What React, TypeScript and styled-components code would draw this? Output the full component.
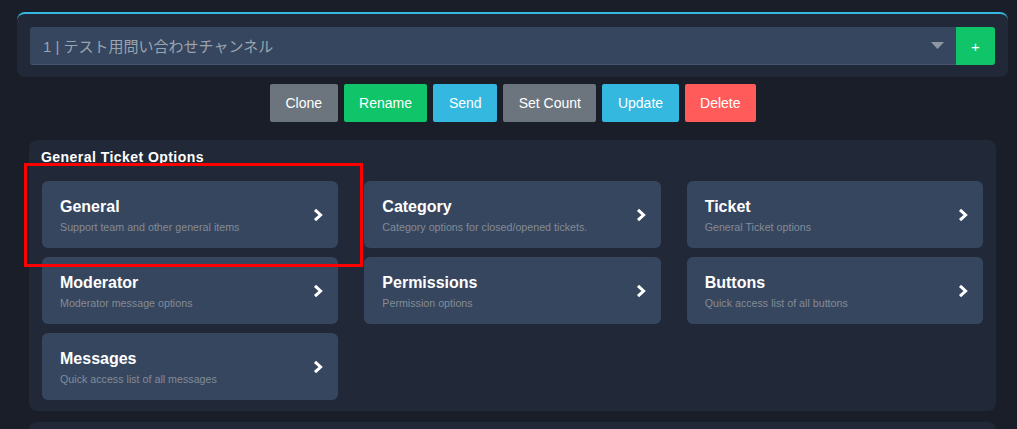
import React from 'react';
import styled, { createGlobalStyle } from 'styled-components';

const GlobalStyle = createGlobalStyle`
  html, body {
    margin: 0;
    padding: 0;
    background: #191e29;
    font-family: "Liberation Sans", Arial, "Noto Sans CJK JP", sans-serif;
    overflow: hidden;
  }
`;

const colors = {
  gray: '#6c757d',
  green: '#10c469',
  cyan: '#35b8e0',
  red: '#ff5b5b',
};

type Variant = keyof typeof colors;

const Page = styled.div`
  position: relative;
  width: 991px;
  padding: 12px 0 0 17px;
`;

const TopPanel = styled.div`
  display: flex;
  background: #212938;
  border-top: 2px solid #35b8e0;
  border-radius: 8px;
  padding: 13px 13px 12px 13px;
`;

const SelectBox = styled.div`
  flex: 1;
  display: flex;
  align-items: center;
  justify-content: space-between;
  height: 38px;
  box-sizing: border-box;
  padding: 0 12px 0 13px;
  background: #36465e;
  border-bottom: 1px solid #46556d;
  border-radius: 3px 0 0 3px;
  color: #9aa4b0;
  font-size: 15px;
  font-family: "Liberation Sans", Arial, "Noto Sans CJK JP", sans-serif;
`;

const AddButton = styled.button`
  width: 39px;
  height: 38px;
  border: none;
  border-radius: 0 3px 3px 0;
  background: #10c469;
  color: #fff;
  font-size: 15px;
  font-family: inherit;
  padding: 0;
`;

const ActionRow = styled.div`
  display: flex;
  justify-content: center;
  gap: 6px;
  margin-top: 7px;
  padding-left: 1px;
`;

const ActionButton = styled.button<{ $variant: Variant }>`
  height: 38px;
  padding: 0 15.5px;
  border: none;
  border-radius: 2px;
  background: ${p => colors[p.$variant]};
  color: #fff;
  font-size: 14px;
  font-family: "Liberation Sans", Arial, sans-serif;
`;

const Section = styled.div`
  margin: 18px 12px 0 12px;
  background: #212938;
  border-radius: 8px;
  padding: 9px 13px 11px 13px;
`;

const SectionTitle = styled.div`
  color: #fff;
  font-size: 14px;
  font-weight: bold;
  letter-spacing: 0.45px;
  line-height: 16px;
  margin-bottom: 16px;
  margin-left: -1px;
`;

const Grid = styled.div`
  display: grid;
  grid-template-columns: repeat(3, 1fr);
  column-gap: 26px;
  row-gap: 9px;
`;

const Card = styled.div`
  display: flex;
  align-items: center;
  justify-content: space-between;
  height: 67px;
  box-sizing: border-box;
  padding: 1px 15px 0 18px;
  background: #36465e;
  border-radius: 6px;
`;

const CardText = styled.div`
  display: flex;
  flex-direction: column;
  gap: 5px;
`;

const CardTitle = styled.div`
  color: #fff;
  font-size: 16px;
  font-weight: bold;
  line-height: 19px;
`;

const CardDesc = styled.div`
  color: #838b97;
  font-size: 10.7px;
  line-height: 13px;
`;

const NextSection = styled.div`
  margin: 11px 12px 0 12px;
  height: 60px;
  background: #212938;
  border-radius: 8px;
`;

const Highlight = styled.div`
  position: absolute;
  left: 24px;
  top: 163px;
  width: 339px;
  height: 104px;
  box-sizing: border-box;
  border: 3px solid #ff0000;
  pointer-events: none;
`;

const Caret = () => (
  <svg width="13" height="7" viewBox="0 0 13 7">
    <path d="M0 0 L13 0 L6.5 7 Z" fill="#8e98a3" />
  </svg>
);

const Chevron = () => (
  <svg width="10" height="14" viewBox="0 0 10 14">
    <path d="M2 1.8 L7.6 7 L2 12.2" fill="none" stroke="#fff" strokeWidth="3" />
  </svg>
);

const actions: { label: string; variant: Variant }[] = [
  { label: 'Clone', variant: 'gray' },
  { label: 'Rename', variant: 'green' },
  { label: 'Send', variant: 'cyan' },
  { label: 'Set Count', variant: 'gray' },
  { label: 'Update', variant: 'cyan' },
  { label: 'Delete', variant: 'red' },
];

const options = [
  { title: 'General', desc: 'Support team and other general items' },
  { title: 'Category', desc: 'Category options for closed/opened tickets.' },
  { title: 'Ticket', desc: 'General Ticket options' },
  { title: 'Moderator', desc: 'Moderator message options' },
  { title: 'Permissions', desc: 'Permission options' },
  { title: 'Buttons', desc: 'Quick access list of all buttons' },
  { title: 'Messages', desc: 'Quick access list of all messages' },
];

export default function App() {
  return (
    <>
      <GlobalStyle />
      <Page>
        <TopPanel>
          <SelectBox>
            <span>1 | テスト用問い合わせチャンネル</span>
            <Caret />
          </SelectBox>
          <AddButton>+</AddButton>
        </TopPanel>
        <ActionRow>
          {actions.map(a => (
            <ActionButton key={a.label} $variant={a.variant}>{a.label}</ActionButton>
          ))}
        </ActionRow>
        <Section>
          <SectionTitle>General Ticket Options</SectionTitle>
          <Grid>
            {options.map(o => (
              <Card key={o.title}>
                <CardText>
                  <CardTitle>{o.title}</CardTitle>
                  <CardDesc>{o.desc}</CardDesc>
                </CardText>
                <Chevron />
              </Card>
            ))}
          </Grid>
        </Section>
        <NextSection />
        <Highlight />
      </Page>
    </>
  );
}
